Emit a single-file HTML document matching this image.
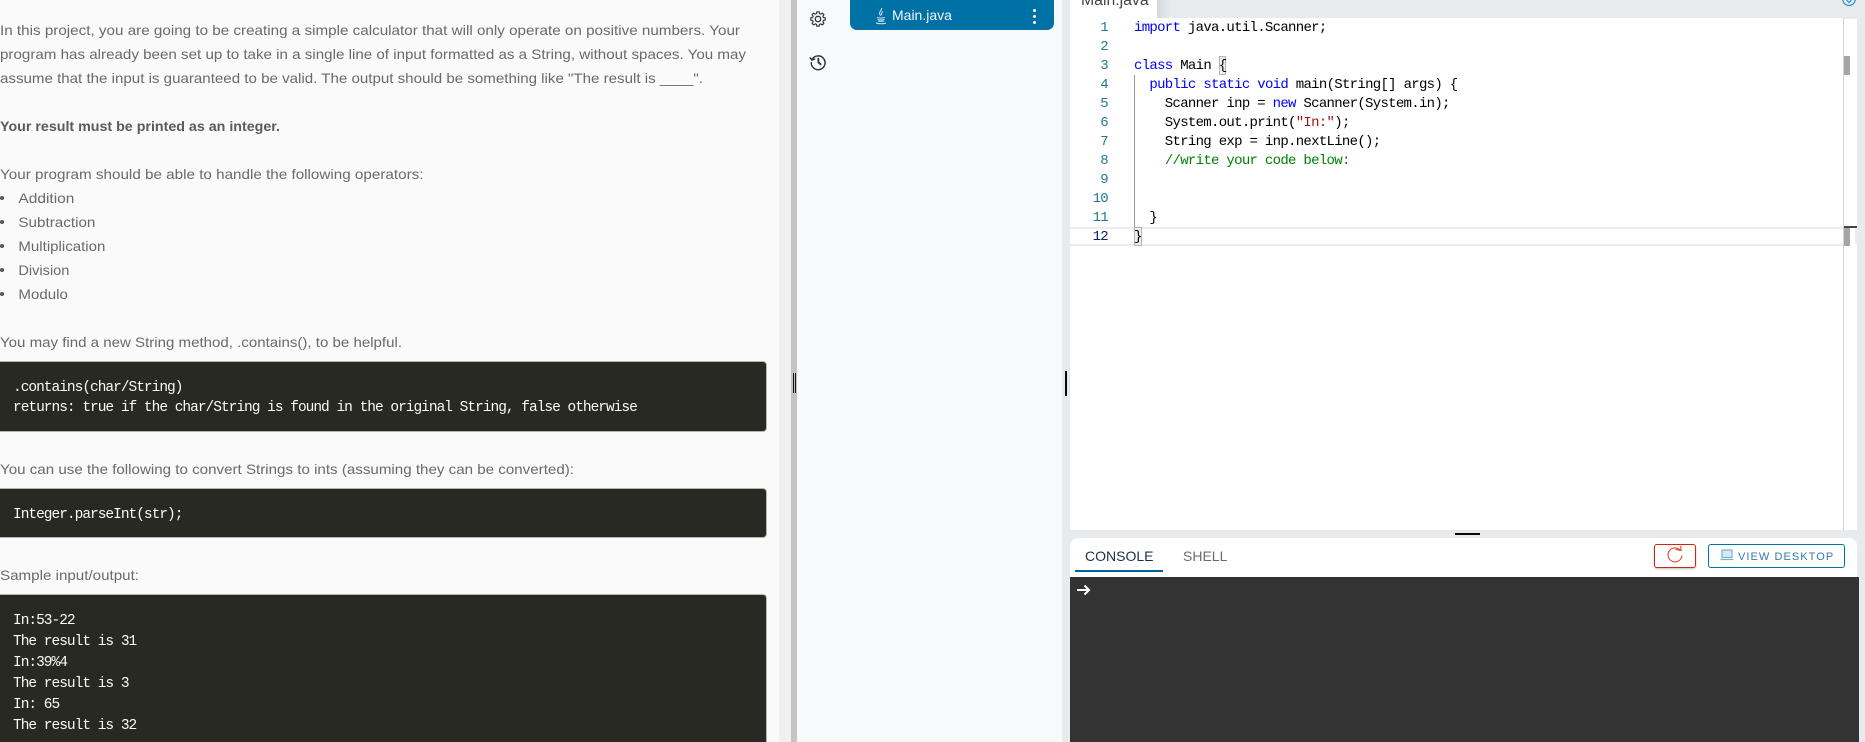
<!DOCTYPE html>
<html lang="en">
<head>
<meta charset="utf-8">
<title>Main.java</title>
<style>
html,body{margin:0;padding:0;width:1865px;height:742px;overflow:hidden;background:#fff}
body{position:relative;font-family:"Liberation Sans",sans-serif}
.a{position:absolute}
.code{position:absolute;left:13px;font:14.5px "Liberation Mono",monospace;letter-spacing:-1px;color:#fafaf4;white-space:pre;line-height:21px;height:21px}
.block{position:absolute;left:-4px;width:771px;background:#282923;border:1px solid #b4b4b4;border-radius:4px;box-sizing:border-box}
.ln{position:absolute;width:40px;left:1068px;margin-top:1px;text-align:right;font:14px/19px "Liberation Mono",monospace;letter-spacing:-.7px;color:#237893}
.cl{position:absolute;left:1134px;margin-top:1px;font:14px/19px "Liberation Mono",monospace;letter-spacing:-.7px;color:#000;white-space:pre}
.k{color:#00f}.s{color:#a31515}.c{color:#008000}
</style>
</head>
<body>
<!-- left panel -->
<div class="a" style="left:0;top:0;width:779px;height:742px;background:#fafafa"></div>
<div class="a" style="left:779px;top:0;width:12px;height:742px;background:#f0f0f0"></div>
<div class="a" style="left:791px;top:0;width:6px;height:742px;background:#c4c4c4"></div>
<div class="a" style="left:793px;top:373px;width:1px;height:20px;background:#111"></div>
<div class="a" style="left:795px;top:373px;width:1px;height:20px;background:#111"></div>

<svg class="a" style="left:0;top:0" width="779" height="742" font-family="'Liberation Sans',sans-serif" font-size="14" fill="#6a6a6a">
<text x="0" y="35" textLength="740" lengthAdjust="spacingAndGlyphs">In this project, you are going to be creating a simple calculator that will only operate on positive numbers. Your</text>
<text x="0" y="59" textLength="746" lengthAdjust="spacingAndGlyphs">program has already been set up to take in a single line of input formatted as a String, without spaces. You may</text>
<text x="0" y="83" textLength="703" lengthAdjust="spacingAndGlyphs">assume that the input is guaranteed to be valid. The output should be something like "The result is ____".</text>
<text x="0" y="131" font-weight="700" fill="#5a5a5a" textLength="280" lengthAdjust="spacingAndGlyphs">Your result must be printed as an integer.</text>
<text x="0" y="179" textLength="423.5" lengthAdjust="spacingAndGlyphs">Your program should be able to handle the following operators:</text>
<circle cx="2" cy="198" r="2" fill="#555"/><text x="18.4" y="203" textLength="56" lengthAdjust="spacingAndGlyphs">Addition</text>
<circle cx="2" cy="222" r="2" fill="#555"/><text x="18.4" y="227" textLength="77" lengthAdjust="spacingAndGlyphs">Subtraction</text>
<circle cx="2" cy="246" r="2" fill="#555"/><text x="18.4" y="251" textLength="87" lengthAdjust="spacingAndGlyphs">Multiplication</text>
<circle cx="2" cy="270" r="2" fill="#555"/><text x="18.4" y="275" textLength="51" lengthAdjust="spacingAndGlyphs">Division</text>
<circle cx="2" cy="294" r="2" fill="#555"/><text x="18.4" y="299" textLength="49.5" lengthAdjust="spacingAndGlyphs">Modulo</text>
<text x="0" y="347" textLength="402" lengthAdjust="spacingAndGlyphs">You may find a new String method, .contains(), to be helpful.</text>
<text x="0" y="474" textLength="574" lengthAdjust="spacingAndGlyphs">You can use the following to convert Strings to ints (assuming they can be converted):</text>
<text x="0" y="580" textLength="139" lengthAdjust="spacingAndGlyphs">Sample input/output:</text>
</svg>

<div class="block" style="top:361px;height:71px"></div>
<div class="code" style="top:378px">.contains(char/String)</div>
<div class="code" style="top:398px">returns: true if the char/String is found in the original String, false otherwise</div>
<div class="block" style="top:488px;height:50px"></div>
<div class="code" style="top:505px">Integer.parseInt(str);</div>
<div class="block" style="top:594px;height:160px"></div>
<div class="code" style="top:611px">In:53-22</div>
<div class="code" style="top:632px">The result is 31</div>
<div class="code" style="top:653px">In:39%4</div>
<div class="code" style="top:674px">The result is 3</div>
<div class="code" style="top:695px">In: 65</div>
<div class="code" style="top:716px">The result is 32</div>

<!-- file tree panel -->
<div class="a" style="left:797px;top:0;width:265px;height:742px;background:#f8f9fb"></div>
<div class="a" style="left:1062px;top:0;width:8px;height:742px;background:#e8ebee"></div>
<div class="a" style="left:1065px;top:371px;width:2px;height:25px;background:#0a0a0a"></div>

<svg class="a" style="left:809px;top:10px" width="18" height="18" viewBox="0 0 24 24" fill="none" stroke="#333" stroke-width="1.7" stroke-linejoin="round"><path d="M10.3 2.6h3.4l.5 2.7 1.9.8 2.3-1.6 2.4 2.4-1.6 2.3.8 1.9 2.7.5v3.4l-2.7.5-.8 1.9 1.6 2.3-2.4 2.4-2.3-1.6-1.9.8-.5 2.7h-3.4l-.5-2.7-1.9-.8-2.3 1.6-2.4-2.4 1.6-2.3-.8-1.9-2.7-.5v-3.4l2.7-.5.8-1.9-1.6-2.3 2.4-2.4 2.3 1.6 1.9-.8z" transform="translate(12 12) scale(.9) translate(-12 -13.3)"/><circle cx="12" cy="12" r="3.6"/></svg>
<svg class="a" style="left:809px;top:53px" width="18" height="18" viewBox="0 0 24 24" fill="none" stroke="#333" stroke-width="1.9" stroke-linecap="round" stroke-linejoin="round"><path d="M4.2 8.5A9.2 9.2 0 1 1 3 13"/><path d="M1.5 6.5 4 9.5 7.5 8"/><path d="M12.5 7.5v5l3 2.5" stroke-width="2.4"/></svg>

<div class="a" style="left:850px;top:-6px;width:204px;height:36px;background:#0071a4;border-radius:7px"></div>
<svg class="a" style="left:874px;top:7px" width="14" height="18" viewBox="0 0 14 18" fill="none" stroke="#cfe4ee" stroke-width="1"><path d="M7.5 1c1 2-2.5 3.5-2 5.5.2 1 1 1.6 1.2 2.4M9 4.5C7.5 5.5 7 6.5 7.7 8"/><path d="M3 10.5c2 .6 6 .6 8 0M3.5 12.5c2 .5 5 .5 7 0M4 14c2 .4 4 .4 6 0M2 16c3 1 8 1 10 0"/></svg>
<div class="a" style="left:892px;top:6px;font-size:14px;line-height:18px;color:#f2f7fa;white-space:nowrap">Main.java</div>
<div class="a" style="left:1032.5px;top:8.5px;width:3px;height:3px;border-radius:50%;background:#fff"></div>
<div class="a" style="left:1032.5px;top:14.5px;width:3px;height:3px;border-radius:50%;background:#fff"></div>
<div class="a" style="left:1032.5px;top:20.5px;width:3px;height:3px;border-radius:50%;background:#fff"></div>

<!-- editor -->
<div class="a" style="left:1070px;top:0;width:795px;height:742px;background:#e8ebee"></div>
<div class="a" style="left:1157px;top:0;width:14px;height:18px;background:linear-gradient(90deg,#d6d9dc,#e8ebee)"></div>
<div class="a" style="left:1070px;top:-4px;width:87px;height:22px;background:#fff;overflow:hidden"><div class="a" style="left:11px;top:-6px;font-size:15.8px;line-height:22px;color:#444;white-space:nowrap">Main.java</div></div>
<svg class="a" style="left:1840px;top:0" width="18" height="8" fill="none" stroke="#2b8fc4" stroke-width="1.2"><circle cx="9" cy="-1" r="6.4"/><path d="M6.5 0l2.5 2.5L11.5 0"/></svg>

<div class="a" style="left:1070px;top:18px;width:773px;height:512px;background:#fff"></div>
<div class="a" style="left:1843px;top:18px;width:1px;height:512px;background:#d4d4d4"></div>
<div class="a" style="left:1844px;top:19px;width:13px;height:511px;background:#fff"></div>
<div class="a" style="left:1844px;top:56px;width:6px;height:19px;background:#a6a6a6"></div>
<div class="a" style="left:1844px;top:226px;width:13px;height:2px;background:#444"></div>
<div class="a" style="left:1844px;top:228px;width:6px;height:18px;background:#a6a6a6"></div>
<div class="a" style="left:1855px;top:228px;width:2px;height:16px;background:#ececec"></div>
<div class="a" style="left:1070px;top:227px;width:773px;height:19px;box-sizing:border-box;border-top:2px solid #ececec;border-bottom:2px solid #ececec"></div>
<div class="a" style="left:1134px;top:75px;width:1px;height:171px;background:#999"></div>
<div class="a" style="left:1219px;top:56px;width:7px;height:19px;box-sizing:border-box;background:#eef0ee;border:1px solid #b4b4b4"></div>
<div class="a" style="left:1134px;top:227px;width:8px;height:19px;box-sizing:border-box;background:#eef0ee;border:1px solid #b4b4b4"></div>

<div class="ln" style="top:18px">1</div><div class="cl" style="top:18px"><span class="k">import</span> java.util.Scanner;</div>
<div class="ln" style="top:37px">2</div>
<div class="ln" style="top:56px">3</div><div class="cl" style="top:56px"><span class="k">class</span> Main {</div>
<div class="ln" style="top:75px">4</div><div class="cl" style="top:75px">  <span class="k">public</span> <span class="k">static</span> <span class="k">void</span> main(String[] args) {</div>
<div class="ln" style="top:94px">5</div><div class="cl" style="top:94px">    Scanner inp = <span class="k">new</span> Scanner(System.in);</div>
<div class="ln" style="top:113px">6</div><div class="cl" style="top:113px">    System.out.print(<span class="s">"In:"</span>);</div>
<div class="ln" style="top:132px">7</div><div class="cl" style="top:132px">    String exp = inp.nextLine();</div>
<div class="ln" style="top:151px">8</div><div class="cl" style="top:151px">    <span class="c">//write your code below:</span></div>
<div class="ln" style="top:170px">9</div>
<div class="ln" style="top:189px">10</div>
<div class="ln" style="top:208px">11</div><div class="cl" style="top:208px">  }</div>
<div class="ln" style="top:227px;color:#0b216f">12</div><div class="cl" style="top:227px">}</div>

<!-- divider handle -->
<div class="a" style="left:1455px;top:533px;width:25px;height:2px;background:#0a0a0a"></div>

<!-- console -->
<div class="a" style="left:1070px;top:538px;width:787px;height:40px;background:#fff;border-radius:8px 8px 0 0"></div>
<div class="a" style="left:1085px;top:547px;font-size:14px;line-height:18px;color:#20304a;white-space:nowrap">CONSOLE</div>
<div class="a" style="left:1183px;top:547px;font-size:14px;line-height:18px;color:#6d6d6d;white-space:nowrap">SHELL</div>
<div class="a" style="left:1075px;top:570px;width:88px;height:2px;background:#00639e"></div>

<div class="a" style="left:1654px;top:544px;width:42px;height:24px;box-sizing:border-box;border:1px solid #c9280d;border-radius:3px;background:#fff;box-shadow:0 1px 2px rgba(0,0,0,.25)"></div>
<svg class="a" style="left:1665px;top:545px" width="20" height="20" viewBox="0 0 20 20" fill="none" stroke="#d9452c" stroke-width="1.1"><path d="M15.5 5.5A7 7 0 1 0 17 10.5"/><path d="M10.5 4.3 16 5.6 15.8 .8"/></svg>

<div class="a" style="left:1708px;top:544px;width:137px;height:24px;box-sizing:border-box;border:1px solid #0074a8;border-radius:3px;background:#fff"></div>
<svg class="a" style="left:1720px;top:549px" width="14" height="12" viewBox="0 0 14 12" fill="none" stroke="#78b2d0" stroke-width="1.2"><rect x="2" y="1" width="10" height="7.5" fill="#d8e9f2"/><path d="M.5 10.5h13"/></svg>
<div class="a" style="left:1738px;top:548px;font-size:11px;line-height:18px;letter-spacing:1.06px;color:#2f7ca6;white-space:nowrap">VIEW DESKTOP</div>

<div class="a" style="left:1070px;top:577px;width:789px;height:165px;background:#333"></div>
<svg class="a" style="left:1076px;top:583px" width="16" height="14" fill="none" stroke="#fff" stroke-width="2"><path d="M1 7h12M8.5 2.5 13 7l-4.5 4.5"/></svg>
</body>
</html>
